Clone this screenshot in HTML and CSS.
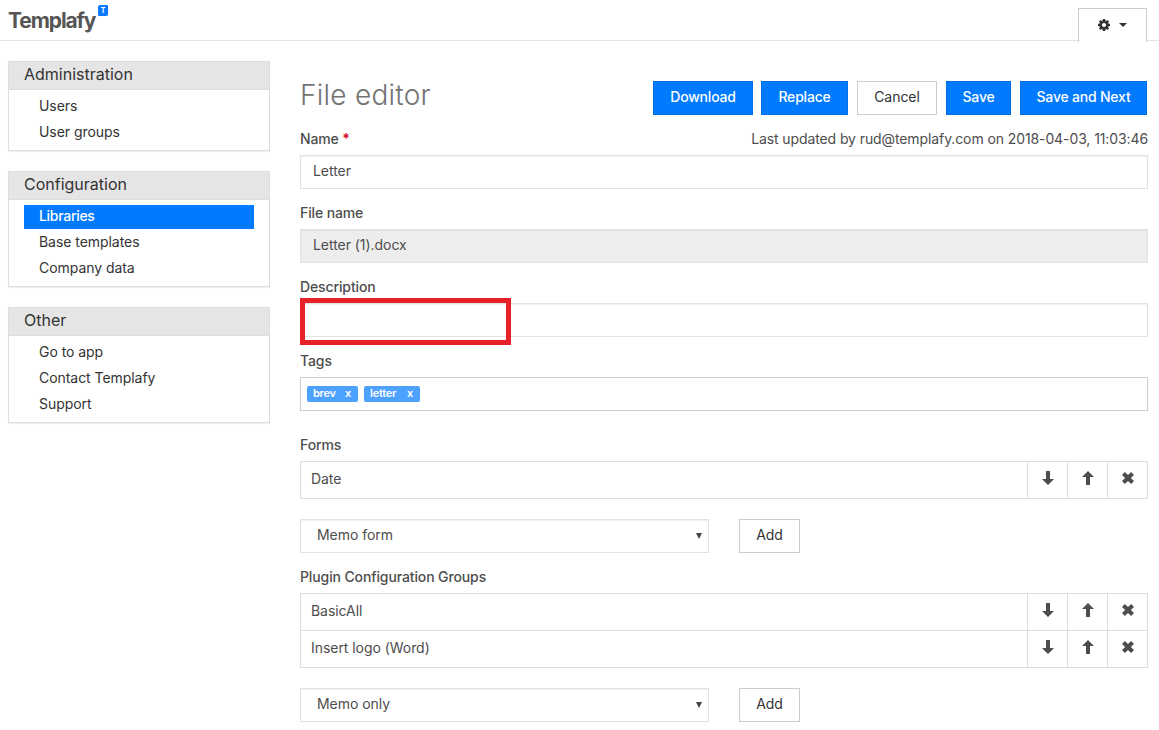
FILE: index.html
```html
<!DOCTYPE html>
<html lang="en">
<head>
<meta charset="utf-8">
<title>Templafy - File editor</title>
<link rel="stylesheet" href="styles.css">
</head>
<body>
<svg class="sprite" aria-hidden="true">
  <symbol id="down" viewBox="0 0 12 14"><path d="M4 0h4v8h4L6 14 0 8h4z"/></symbol>
  <symbol id="up" viewBox="0 0 12 14"><path d="M4 14h4V6h4L6 0 0 6h4z"/></symbol>
  <symbol id="remove" viewBox="0 0 12 12"><path d="M2.900 0 6 3.100 9.100 0 12 2.900 8.900 6l3.100 3.100-2.900 2.900L6 8.900 2.900 12 0 9.100 3.100 6 0 2.900z"/></symbol>
</svg>
<header class="topbar">
  <a class="logo"><span class="logo-text">Templafy</span><span class="logo-mark">T</span></a>
  <div class="settings">
    <svg class="gear" viewBox="0 0 12 12"><path fill-rule="evenodd" d="M4.900 0h2.200l.3 1.500.9.4L9.600 1 11 2.400l-.9 1.300.4.9 1.500.3v2.200l-1.500.3-.4.9.9 1.300L9.600 11l-1.300-.9-.9.4L7.100 12H4.900l-.3-1.500-.9-.4-1.300.9L1 9.600l.9-1.300-.4-.9L0 7.100V4.900l1.500-.3.4-.9L1 2.400 2.400 1l1.300.9.9-.4zM6 3.900a2.100 2.100 0 1 0 0 4.200 2.100 2.100 0 0 0 0-4.200z"/></svg>
    <span class="caret"></span>
  </div>
</header>
<div class="page">
  <nav class="sidebar">
    <section class="panel">
      <h2 class="panel-title">Administration</h2>
      <ul class="menu"><li>Users</li><li>User groups</li></ul>
    </section>
    <section class="panel">
      <h2 class="panel-title">Configuration</h2>
      <ul class="menu"><li class="active">Libraries</li><li>Base templates</li><li>Company data</li></ul>
    </section>
    <section class="panel">
      <h2 class="panel-title">Other</h2>
      <ul class="menu"><li>Go to app</li><li>Contact Templafy</li><li>Support</li></ul>
    </section>
  </nav>
  <main class="editor">
    <div class="editor-head">
      <h1>File editor</h1>
      <div class="actions">
        <button class="btn primary download">Download</button>
        <button class="btn primary replace">Replace</button>
        <button class="btn cancel">Cancel</button>
        <button class="btn primary save">Save</button>
        <button class="btn primary save-next">Save and Next</button>
      </div>
    </div>
    <div class="label-row"><span class="label">Name <b class="required">*</b></span><span class="updated">Last updated by rud@templafy.com on 2018-04-03, 11:03:46</span></div>
    <div class="input">Letter</div>
    <div class="label-row"><span class="label">File name</span></div>
    <div class="input disabled">Letter (1).docx</div>
    <div class="label-row"><span class="label">Description</span></div>
    <div class="input described"><span class="highlight"></span></div>
    <div class="label-row"><span class="label">Tags</span></div>
    <div class="input tags"><span class="tag brev">brev<i>x</i></span><span class="tag letter">letter<i>x</i></span></div>
    <div class="label-row forms-label"><span class="label">Forms</span></div>
    <div class="list">
      <div class="row"><span class="row-name">Date</span><span class="cell"><svg class="arrow"><use href="#down"/></svg></span><span class="cell"><svg class="arrow"><use href="#up"/></svg></span><span class="cell"><svg class="cross"><use href="#remove"/></svg></span></div>
    </div>
    <div class="add-row"><div class="select">Memo form<span class="select-arrow"></span></div><button class="btn add">Add</button></div>
    <div class="label-row"><span class="label groups">Plugin Configuration Groups</span></div>
    <div class="list">
      <div class="row"><span class="row-name">BasicAll</span><span class="cell"><svg class="arrow"><use href="#down"/></svg></span><span class="cell"><svg class="arrow"><use href="#up"/></svg></span><span class="cell"><svg class="cross"><use href="#remove"/></svg></span></div>
      <div class="row"><span class="row-name">Insert logo (Word)</span><span class="cell"><svg class="arrow"><use href="#down"/></svg></span><span class="cell"><svg class="arrow"><use href="#up"/></svg></span><span class="cell"><svg class="cross"><use href="#remove"/></svg></span></div>
    </div>
    <div class="add-row"><div class="select">Memo only<span class="select-arrow"></span></div><button class="btn add">Add</button></div>
  </main>
</div>
</body>
</html>
```
FILE: styles.css
```css
* { box-sizing: border-box; }
body { margin: 0; height: 730px; overflow: hidden; background: #fff; color: #4d4d4d; font: 14px/20px Inter, "Open Sans", sans-serif; letter-spacing: -0.05px; }
.sprite { display: none; }
svg { fill: #4d4d4d; }

.topbar { height: 41px; padding: 0 12px 0 8px; display: flex; justify-content: space-between; align-items: flex-start; border-bottom: 1px solid #e2e2e2; }
.logo { display: flex; align-items: flex-start; padding-top: 5px; }
.logo-text { width: 90px; margin-top: 3px; font: 700 21px/26px Inter, sans-serif; letter-spacing: -1.1px; color: #555; }
.logo-mark { width: 10px; height: 11px; border-radius: 2px 1px 2px 1px; background: #0a78ff; color: #fff; font: 700 7px/11px Inter, sans-serif; text-align: center; }
.settings { width: 69px; height: 34px; margin-top: 8px; padding: 0 0 2px 19px; display: flex; align-items: center; gap: 9px; border: 1px solid #ccc; border-bottom: 0; background: #fff; }
.gear { width: 12px; height: 12px; fill: #333; }
.caret { border: 4.5px solid transparent; border-top-color: #333; border-bottom: 0; }

.page { display: flex; gap: 30px; padding: 20px 11px 0 8px; }
.sidebar { width: 262px; display: flex; flex-direction: column; gap: 20px; }
.panel { border: 1px solid #ddd; box-shadow: 0 1px 1px rgba(0, 0, 0, .06); }
.panel-title { margin: 0; height: 28px; padding-left: 15px; border-bottom: 1px solid #ddd; background: #e5e5e5; color: #333; font-size: 16px; font-weight: 400; line-height: 25px; letter-spacing: 0; }
.menu { margin: 0; padding: 5px 15px; list-style: none; display: flex; flex-direction: column; gap: 2px; color: #333; }
.menu li { height: 24px; padding-left: 15px; line-height: 21px; }
.menu .active { background: #007aff; color: #fff; font-weight: 500; letter-spacing: -0.3px; }

.editor { width: 848px; padding-top: 20px; }
.editor-head { height: 48px; display: flex; justify-content: space-between; }
h1 { margin: 0; color: #737373; font-size: 28px; font-weight: 300; line-height: 29px; letter-spacing: 0.25px; }
.actions { display: flex; padding-right: 1px; }
.btn { height: 34px; padding: 0 0 3px; border: 1px solid #ccc; background: #fff; color: #333; font: 14px/20px Inter, "Open Sans", sans-serif; letter-spacing: -0.05px; }
.primary { border-color: #006ee5; background: #007aff; color: #fff; font-weight: 500; letter-spacing: -0.2px; }
.download { width: 100px; margin-right: 8px; }
.replace { width: 87px; margin-right: 9px; }
.cancel { width: 80px; margin-right: 9px; }
.save { width: 65px; margin-right: 9px; }
.save-next { width: 127px; }
.label-row { height: 26px; display: flex; justify-content: space-between; }
.label { font-weight: 500; letter-spacing: -0.12px; }
.updated { letter-spacing: -0.1px; }
.required { color: #d0021b; font-weight: 600; }
.input { height: 34px; margin-bottom: 14px; padding: 0 12px; border: 1px solid #e2e2e2; line-height: 29px; box-shadow: inset 0 1px 1px rgba(0, 0, 0, .06); }
.disabled { background: #ededed; }
.described { position: relative; }
.highlight { position: absolute; left: -1px; top: -6px; width: 211px; height: 47px; border: 5px solid #e62129; }
.tags { display: flex; gap: 6px; padding: 8px 6px; border-color: #ccc; box-shadow: none; }
.tag { height: 16px; padding: 0 7px 0 6px; display: flex; justify-content: space-between; border-radius: 2px; background: #4da1ff; color: #fff; font-size: 11px; font-weight: 600; line-height: 15px; letter-spacing: -0.25px; }
.tag i { font-style: normal; }
.brev { width: 51px; }
.letter { width: 56px; }
.forms-label { margin-top: 24px; }
.list { border: 1px solid #ddd; }
.row { height: 36px; display: flex; }
.row + .row { height: 37px; border-top: 1px solid #ddd; }
.row-name { flex: 1; padding-left: 10px; line-height: 33px; }
.cell { width: 40px; display: flex; align-items: center; justify-content: center; padding-bottom: 4px; border-left: 1px solid #ddd; }
.arrow { width: 12px; height: 14px; }
.cross { width: 12px; height: 12px; }
.add-row { display: flex; gap: 30px; margin: 20px 0 14px; }
.select { width: 409px; height: 34px; display: flex; align-items: center; justify-content: space-between; padding: 0 6px 2px 16px; border: 1px solid #e2e2e2; box-shadow: inset 0 1px 1px rgba(0, 0, 0, .06); }
.select-arrow { margin-top: 1px; border: 3px solid transparent; border-top: 6px solid #444; border-bottom: 0; }
.add { width: 61px; }
```
